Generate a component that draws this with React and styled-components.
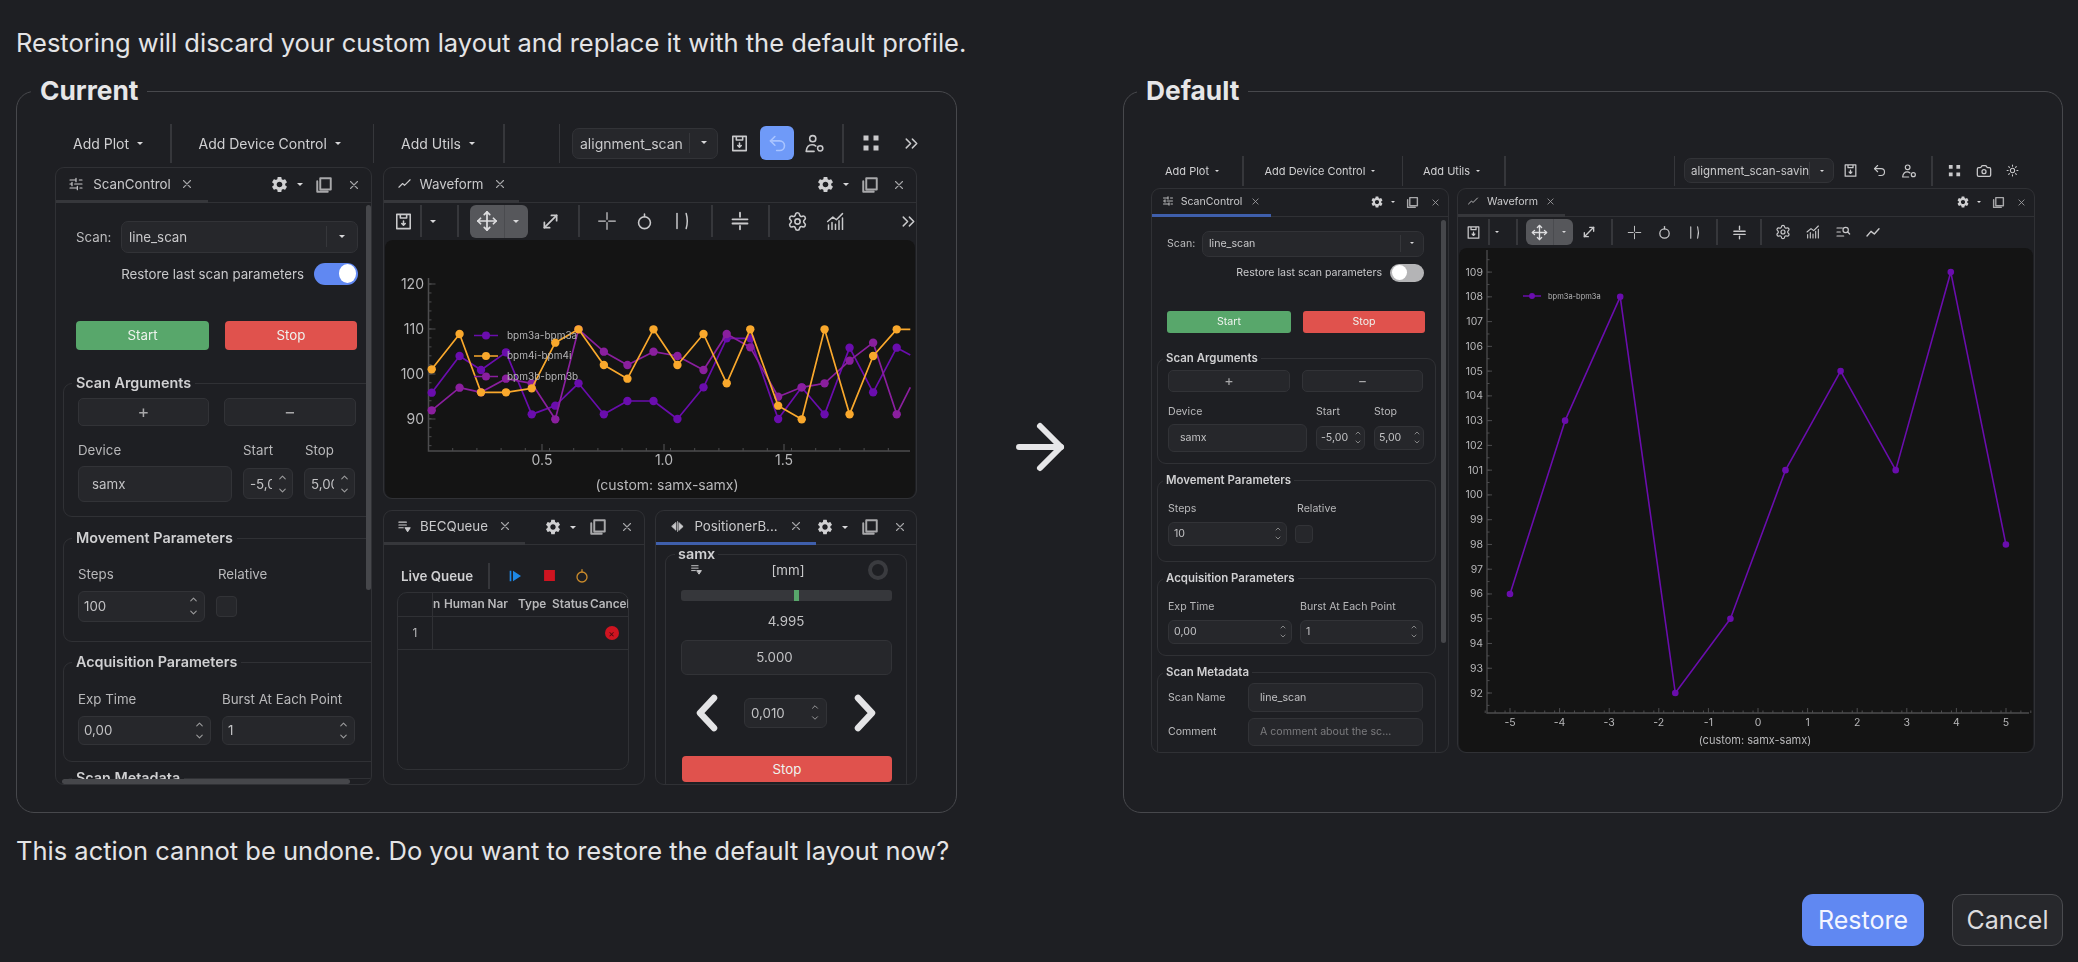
import React from 'react';
import styled, { createGlobalStyle } from 'styled-components';
import { Move, MoveDiagonal, Settings, Camera, Sun, Undo2, ChevronsRight, ArrowRight, ChevronUp, ChevronDown } from 'lucide-react';
import { MdSettings } from 'react-icons/md';

const BG = '#1e1f23';
const FONT = 'Inter, "Noto Sans", "Liberation Sans", sans-serif';

const Global = createGlobalStyle`
  html, body { margin: 0; background: ${BG}; }
  * { box-sizing: border-box; }
  #root { width: 2078px; height: 962px; overflow: hidden; }
`;

const Page = styled.div`
  width: 2078px; height: 962px; padding: 29px 15px 0 16px; background: ${BG};
  color: #e4e4e6; font-family: ${FONT}; display: flex; flex-direction: column;
`;
const Message = styled.p`
  margin: ${p => p.$mt || 0}px 0 0; font-size: 25.5px; line-height: 28px; height: 28px; color: #e4e4e6; white-space: nowrap;
`;
const Compare = styled.div`
  margin-top: 34px; display: flex; align-items: center; justify-content: space-between;
`;
const Frame = styled.section`
  width: ${p => p.$w}px; height: 722px; border: 1.5px solid #47484c; border-radius: 18px; padding-left: ${p => p.$pl}px;
  display: flex; flex-direction: column;
`;
const FrameTitle = styled.h2`
  margin: -15.5px 0 0 ${p => p.$ml}px; width: fit-content; height: 28px; line-height: 28px; padding: 0 9px;
  background: ${BG}; font-size: 26.3px; font-weight: 700; color: #e6e6e8;
`;
const BigArrow = styled.div`
  display: flex; width: 72px; justify-content: center; color: #e6e6e8; margin: 0 -5px 10px -5px;
`;
const Footer = styled.div`
  margin-top: 29px; display: flex; justify-content: flex-end; gap: 28px;
`;
const ActionButton = styled.button`
  height: 52px; width: ${p => p.$w}px; border-radius: 11px; font-family: ${FONT}; font-size: 25px; padding: 0;
  background: ${p => (p.$primary ? '#6088f2' : '#27282c')};
  color: ${p => (p.$primary ? '#f4f6ff' : '#dcdcde')};
  border: ${p => (p.$primary ? 'none' : '1.5px solid #4a4b4f')};
`;

/* ---------- application preview ---------- */
const Preview = styled.div`
  margin-top: ${p => p.$mt}px; width: ${p => p.$w}px; font-size: ${p => p.$fs}px; color: #c9c9cb;
  filter: blur(0.6px);
`;
const Bar = styled.div`
  display: flex; align-items: center; height: ${p => p.$h}px; flex: none; white-space: nowrap;
`;
const VSep = styled.div`
  flex: none; width: 1.5px; height: ${p => p.$h}px; background: #36373b;
`;
const Slot = styled.div`
  flex: none; display: flex; align-items: center; justify-content: center; width: ${p => p.$w}px; height: 100%;
  color: ${p => p.$color || 'inherit'};
`;
const MenuItem = styled.div`
  flex: none; width: ${p => p.$w}px; padding-left: ${p => p.$pl}px; display: flex; align-items: center; gap: ${p => p.$gap}px;
  color: #d0d0d2; font-size: ${p => p.$fs}px;
`;
const Caret = styled.span`
  flex: none; width: 0; height: 0;
  border-left: ${p => p.$s}px solid transparent; border-right: ${p => p.$s}px solid transparent;
  border-top: ${p => p.$s}px solid #d8d8da;
`;
const Combo = styled.div`
  flex: none; width: ${p => p.$w}px; height: ${p => p.$h}px; background: #26272b; border: 1px solid #323337; border-radius: 7px;
  display: flex; align-items: center; padding-left: ${p => p.$pl}px; overflow: hidden; font-size: ${p => (p.$fs ? `${p.$fs}px` : 'inherit')};
  margin-left: ${p => p.$ml || 0}px;
`;
const ComboText = styled.span`
  flex: 1; min-width: 0; overflow: hidden; white-space: nowrap;
`;
const ComboButton = styled.div`
  flex: none; width: ${p => p.$w}px; height: 70%; border-left: 1px solid #36373b; display: flex; align-items: center; justify-content: center;
`;
const Highlight = styled.div`
  width: 100%; height: ${p => p.$h}px; background: #6f9af8; color: #a9c4ff; border-radius: 6px;
  display: flex; align-items: center; justify-content: center;
`;
const Docks = styled.div`
  display: flex; gap: ${p => p.$gap}px; margin-top: ${p => p.$mt}px;
`;
const Column = styled.div`
  display: flex; flex-direction: column; gap: ${p => p.$gap}px; width: ${p => p.$w}px; flex: none;
`;
const Row = styled.div`
  display: flex; gap: ${p => p.$gap}px;
`;
const Panel = styled.div`
  position: relative; flex: none; width: ${p => p.$w}px; height: ${p => p.$h}px; border: 1px solid #303135; border-radius: 9px;
  overflow: hidden; display: flex; flex-direction: column;
`;
const PanelHeader = styled.div`
  flex: none; height: ${p => p.$h}px; display: flex; align-items: stretch; border-bottom: 1px solid #303135;
`;
const Tab = styled.div`
  flex: none; width: ${p => p.$w}px; display: flex; align-items: center; white-space: nowrap; overflow: hidden;
  border-bottom: ${p => p.$line}px solid ${p => (p.$active ? '#3f5fac' : '#36373b')};
  margin-bottom: -1px;
`;
const Tools = styled.div`
  display: flex; align-items: center;
`;
const Body = styled.div`
  flex: 1; min-height: 0; overflow: hidden; padding: ${p => p.$pt}px 0 0 ${p => p.$pl}px;
`;
const Labelled = styled.div`
  display: flex; align-items: center; width: ${p => p.$w}px;
`;
const FieldName = styled.span`
  flex: none; width: ${p => p.$w}px; white-space: nowrap; color: #bcbcbe;
`;
const ToggleRow = styled.div`
  margin-top: ${p => p.$mt}px; width: ${p => p.$w}px; height: ${p => p.$h}px; display: flex; align-items: center; justify-content: flex-end;
  gap: ${p => p.$gap}px; white-space: nowrap;
`;
const Toggle = styled.div`
  flex: none; width: ${p => p.$w}px; height: 100%; border-radius: 99px; background: ${p => (p.$on ? '#6088f2' : '#b4b4b6')};
  display: flex; align-items: center; justify-content: ${p => (p.$on ? 'flex-end' : 'flex-start')}; padding: 0 2px;
`;
const Knob = styled.div`
  height: 85%; aspect-ratio: ${p => p.$ratio}; border-radius: 50%; background: #fff;
`;
const ButtonRow = styled.div`
  margin-top: ${p => p.$mt}px; display: flex; gap: ${p => p.$gap}px;
`;
const RunButton = styled.div`
  flex: none; width: ${p => p.$w}px; height: ${p => p.$h}px; border-radius: ${p => p.$r || 4}px; background: ${p => p.$c};
  color: #eef3ee; display: flex; align-items: center; justify-content: center; margin-left: ${p => p.$ml || 0}px;
`;
const Group = styled.div`
  margin: ${p => p.$mt}px 0 0 ${p => p.$ml}px; width: ${p => p.$w}px; height: ${p => p.$h}px; flex: none;
  border: 1px solid #303135; border-radius: 9px; padding-left: ${p => p.$pl}px;
  ${p => p.$open && 'border-bottom: none;'}
`;
const GroupTitle = styled.div`
  margin: ${p => -p.$h / 2 - 1}px 0 0 ${p => p.$ml}px; width: fit-content; height: ${p => p.$h}px; line-height: ${p => p.$h}px;
  padding: 0 ${p => p.$pad}px; background: ${BG}; font-weight: 600; font-size: 1.08em; color: #d0d0d2; white-space: nowrap;
`;
const Cols = styled.div`
  display: grid; grid-template-columns: ${p => p.$cols}; column-gap: ${p => p.$gap}px; align-items: center; margin-top: ${p => p.$mt}px;
`;
const Label = styled.div`
  height: ${p => p.$h}px; line-height: ${p => p.$h}px; white-space: nowrap; color: #b8b8ba;
  margin-left: ${p => p.$ml || 0}px;
`;
const SquareButton = styled.div`
  height: ${p => p.$h}px; background: #26272b; border: 1px solid #323337; border-radius: 5px; color: #a8a8aa;
  display: flex; align-items: center; justify-content: center; font-size: 1.35em;
`;
const TextBox = styled.div`
  flex: none; height: ${p => p.$h}px; width: ${p => (p.$w ? `${p.$w}px` : 'auto')}; background: #26272b; border: 1px solid #323337; border-radius: 6px; display: flex; align-items: center;
  padding-left: ${p => p.$pl}px; white-space: nowrap; overflow: hidden; color: ${p => (p.$dim ? '#7b7b7e' : '#c2c2c4')};
`;
const Spin = styled.div`
  flex: none; height: ${p => p.$h}px; width: ${p => (p.$w ? `${p.$w}px` : 'auto')}; margin-left: ${p => p.$ml || 0}px;
  background: #26272b; border: 1px solid #323337; border-radius: 6px; display: flex; align-items: center;
  padding-left: ${p => p.$pl}px; overflow: hidden; color: #c2c2c4;
`;
const SpinText = styled.span`
  flex: 1; min-width: 0; overflow: hidden; white-space: nowrap;
`;
const SpinArrows = styled.div`
  flex: none; width: ${p => p.$w}px; display: flex; flex-direction: column; align-items: center; gap: ${p => p.$gap}px; color: #9a9a9c;
`;
const Check = styled.div`
  width: ${p => p.$s}px; height: ${p => p.$s}px; background: #26272b; border: 1px solid #323337; border-radius: 4px;
`;
const Inline = styled.div`
  display: flex; align-items: center; margin-top: ${p => p.$mt}px; gap: ${p => p.$gap || 0}px;
`;
const VScroll = styled.div`
  position: absolute; top: ${p => p.$top}px; right: ${p => p.$right}px; width: 5px; height: ${p => p.$h}px; background: #46474b; border-radius: 3px;
`;
const HScroll = styled.div`
  position: absolute; bottom: 0; left: 6px; width: ${p => p.$w}px; height: 5px; background: #46474b; border-radius: 3px;
`;
const PlotBox = styled.div`
  flex: 1; min-height: 0; background: #141414; border-radius: 8px; margin: 0 1px; overflow: hidden;
`;
const Canvas = styled.svg`
  display: block; font-family: ${FONT};
`;
const ToolStrip = styled.div`
  flex: none; height: ${p => p.$h}px; display: flex; align-items: center;
`;
const ModeButton = styled.div`
  width: 100%; height: ${p => p.$h}px; background: #56575b; border-radius: 6px; display: flex; align-items: center; color: #dedee0;
`;
const ModeIcon = styled.div`
  flex: none; width: 60%; height: 100%; display: flex; align-items: center; justify-content: center; border-right: 1px solid #4a4b4f;
`;
const ModeCaret = styled.div`
  flex: 1; display: flex; align-items: center; justify-content: center;
`;
/* queue */
const QueueHead = styled.div`
  display: flex; align-items: center; height: 30px; font-weight: 600; color: #d0d0d2; white-space: nowrap;
`;
const Table = styled.div`
  margin: 1px 0 0 13px; width: 232px; height: 178px; border: 1px solid #303135; border-radius: 10px; overflow: hidden;
  font-size: 11.8px;
`;
const TRow = styled.div`
  display: flex; height: ${p => p.$h}px; border-bottom: 1px solid #303135; align-items: stretch;
`;
const TCell = styled.div`
  flex: none; width: ${p => p.$w}px; display: flex; align-items: center; justify-content: ${p => p.$j || 'flex-start'};
  padding-left: ${p => p.$pl || 0}px; overflow: hidden; white-space: nowrap; font-weight: ${p => p.$b ? 600 : 400};
  color: #b8b8ba; border-right: ${p => (p.$line ? '1px solid #303135' : 'none')};
`;
const CancelDot = styled.div`
  width: 14px; height: 14px; border-radius: 50%; background: #cf1420; color: #4a0a10; font-size: 10px; line-height: 14px; text-align: center;
`;
/* positioner */
const PosGrid = styled.div`
  display: grid; grid-template-columns: 60px 124px 56px; height: 20px; margin-top: -2px; align-items: center; justify-items: center;
`;
const Ring = styled.div`
  width: 20px; height: 20px; border-radius: 50%; border: 4px solid #3a3b3f;
`;
const Track = styled.div`
  margin: 10px 0 0 15px; width: 211px; height: 11px; border-radius: 3px; background: #36373b; padding-left: 113px;
`;
const TrackMark = styled.div`
  width: 5px; height: 100%; background: #58a76b;
`;
const Readout = styled.div`
  margin-top: 10px; height: 20px; line-height: 20px; text-align: center; color: #c2c2c4;
`;
const TargetBox = styled.div`
  margin: 9px 0 0 15px; width: 211px; height: 35px; background: #26272b; border: 1px solid #323337; border-radius: 6px;
  display: flex; align-items: center; justify-content: center; padding-right: 24px; color: #c2c2c4;
`;
const StepRow = styled.div`
  margin: 19px 0 0 15px; display: flex; align-items: center; height: 38px;
`;
const StepArrow = styled.div`
  flex: none; width: 52px; display: flex; justify-content: center; margin-left: ${p => p.$ml || 0}px;
`;

/* ---------- icons ---------- */
const Svg = ({ s, w = 2, fill = 'none', children }) => (
  <svg width={s} height={s} viewBox="0 0 24 24" fill={fill} stroke="currentColor" strokeWidth={w} strokeLinecap="round" strokeLinejoin="round">{children}</svg>
);
const I = {
  close: s => <Svg s={s} w={2.2}><path d="M5 5l14 14M19 5L5 19" /></Svg>,
  max: s => <Svg s={s} w={2.6}><path d="M7 3h14v15H7zM3 7v14h14" /></Svg>,
  gear: s => <MdSettings size={s} />,
  tune: s => <Svg s={s} w={1.8}><path d="M3 6h9M17 6h4M12 3.5v5M3 12h3M10 12h11M6 9.5v5M3 18h11M18 18h3M14 15.5v5" /></Svg>,
  wave: s => <Svg s={s} w={1.8}><path d="M3 18l6-6 3 3 9-9" /></Svg>,
  queue: s => <Svg s={s} w={1.8}><path d="M3 5h12M3 9.5h12M3 14h7" /><path d="M13 14h8l-4 6z" fill="currentColor" /></Svg>,
  pos: s => <Svg s={s} w={1.2}><path d="M9.5 6v12L3 12zM14.5 6l6.5 6-6.5 6z" fill="currentColor" /><path d="M12 4v16" /></Svg>,
  save: s => <Svg s={s} w={2}><path d="M3.5 3h17v18h-17zM8 3v4.5h8V3M12 11.5v5M9.8 14.5l2.2 2.2 2.2-2.2" /></Svg>,
  undo: s => <Undo2 size={s} strokeWidth={1.8} />,
  user: s => <Svg s={s} w={1.8}><circle cx="10" cy="6.5" r="3.5" /><path d="M2.5 21c.5-5 3.2-7.6 6.8-7.6 1.6 0 3 .5 4.2 1.5M2.5 21h9" /><circle cx="18.5" cy="17.5" r="3" /></Svg>,
  grid: s => <Svg s={s} w={0} fill="currentColor"><path d="M3 3h6v6H3zM15 3h6v6h-6zM3 15h6v6H3zM15 15h6v6h-6z" /></Svg>,
  camera: s => <Camera size={s} strokeWidth={1.9} />,
  sun: s => <Sun size={s} strokeWidth={1.9} />,
  more: s => <ChevronsRight size={s} strokeWidth={1.7} />,
  move: s => <Move size={s} strokeWidth={1.9} />,
  diag: s => <MoveDiagonal size={s} strokeWidth={2} />,
  cross: s => <Svg s={s} w={1.5}><path d="M12 2v8M12 14v8M2 12h8M14 12h8" /></Svg>,
  ring: s => <Svg s={s} w={2}><circle cx="12" cy="13.5" r="7.5" /><path d="M12 2.5v3.5" /></Svg>,
  bars: s => <Svg s={s} w={1.8}><path d="M6 3v18" /><path d="M17 3c1.5 5 1.5 13 0 18" /></Svg>,
  center: s => <Svg s={s} w={2.2}><path d="M3 10h18M3 15h18M12 2v5M12 18v4" /></Svg>,
  cog: s => <Settings size={s} strokeWidth={1.8} />,
  chart: s => <Svg s={s} w={1.7}><path d="M4 21v-5M8 21v-8M12 21v-6M16 21v-10M20 21v-13M3 12l6-5 4 3 7-7" /></Svg>,
  zoom: s => <Svg s={s} w={1.8}><path d="M3 6h8M3 12h5M3 18h10" /><circle cx="16" cy="9" r="4" /><path d="M19 12l3 3" /></Svg>,
  line: s => <Svg s={s} w={2.1}><path d="M3 18l6-7 5 4 7-8" /></Svg>,
  play: s => <Svg s={s} w={0} fill="currentColor"><path d="M4 4h2.5v16H4zM9 4l12 8-12 8z" /></Svg>,
  stop: s => <Svg s={s} w={0} fill="currentColor"><path d="M2 2h20v20H2z" /></Svg>,
};
const Arrows = ({ s, gap, w }) => (
  <SpinArrows $w={w} $gap={gap}><ChevronUp size={s} strokeWidth={2.4} /><ChevronDown size={s} strokeWidth={2.4} /></SpinArrows>
);

/* Lays items out in flow so each one's centre falls on `at`. */
const Placed = ({ start, items }) => {
  let cursor = start;
  return items.map((it, i) => {
    const ml = it.at - it.w / 2 - cursor;
    cursor = it.at + it.w / 2;
    return <Slot key={i} $w={it.w} $color={it.color} style={{ marginLeft: ml }}>{it.node}</Slot>;
  });
};
const sep = (at, h) => ({ at, w: 2, node: <VSep $h={h} /> });
const ic = (at, name, s, w = 24, color) => ({ at, w, color, node: I[name](s) });

const Head = ({ h, x, tabW, line, active, icon, title, titleW, iconAt, textAt, closeAt, tools, isz, xs }) => (
  <PanelHeader $h={h}>
    <Tab $w={tabW} $line={line} $active={active}>
      <Placed start={x} items={[
        ic(iconAt, icon, isz, isz),
        { at: textAt + titleW / 2, w: titleW, node: <span>{title}</span> },
        ic(closeAt, 'close', xs, xs, '#a4a4a6'),
      ]} />
    </Tab>
    <Tools><Placed start={x + tabW} items={tools} /></Tools>
  </PanelHeader>
);
const dockTools = (g, c, m, x, gs, cs, ms, xs) => [
  ic(g, 'gear', gs, gs, '#d0d0d2'),
  { at: c, w: 10, node: <Caret $s={cs} /> },
  ic(m, 'max', ms, ms, '#a8a8aa'),
  ic(x, 'close', xs, xs, '#a4a4a6'),
];

/* ---------- charts ---------- */
const xs1 = [142, 220, 280, 350, 422, 488, 553, 624, 690, 763, 830, 903, 968, 1034, 1112, 1178, 1242, 1312, 1378, 1444, 1482];
const a1 = [488, 378, 420, 367, 553, 527, 460, 553, 513, 513, 567, 472, 325, 325, 567, 472, 553, 353, 487, 353, 375];
const a2 = [418, 312, 487, 487, 475, 338, 298, 405, 446, 298, 405, 312, 460, 298, 527, 568, 298, 553, 378, 298, 298];
const a3 = [541, 473, 487, 446, 460, 568, 298, 365, 405, 365, 378, 420, 312, 352, 500, 472, 460, 392, 338, 553, 472];
const lx = z => z / 2.8 - 4;
const ly = z => z / 3 - 10;
const Series = ({ xs, ys, color, r, w, clipLast }) => (
  <g>
    <polyline points={xs.map((x, i) => `${x},${ys[i]}`).join(' ')} fill="none" stroke={color} strokeWidth={w} strokeLinejoin="round" />
    {xs.map((x, i) => (clipLast && i === xs.length - 1 ? null : <circle key={i} cx={x} cy={ys[i]} r={r} fill={color} />))}
  </g>
);
const range = (a, b, step) => { const out = []; for (let v = a; v <= b + 1e-6; v += step) out.push(v); return out; };

const CurrentPlot = () => {
  const xs = xs1.map(lx);
  const AX = '#4c4c4e';
  return (
    <Canvas width="531" height="258">
      <path d="M43.5 38V211H525" fill="none" stroke={AX} strokeWidth="1.5" />
      {range(44, 209, 8.98).map(y => <path key={y} d={`M43.5 ${y}h3`} stroke={AX} />)}
      {[44, 89, 134, 179].map(y => <path key={y} d={`M43.5 ${y}h7`} stroke={AX} strokeWidth="1.2" />)}
      {range(43.5, 525, 24.2).map(x => <path key={x} d={`M${x} 211v-3`} stroke={AX} />)}
      {[157, 279, 399].map(x => <path key={x} d={`M${x} 211v-7`} stroke={AX} strokeWidth="1.2" />)}
      <g fill="#b8b8ba" fontSize="14" textAnchor="end">
        {[['120', 44], ['110', 89], ['100', 134], ['90', 179]].map(([t, y]) => <text key={t} x="39" y={y + 5}>{t}</text>)}
      </g>
      <g fill="#b8b8ba" fontSize="14" textAnchor="middle">
        {[['0.5', 157], ['1.0', 279], ['1.5', 399]].map(([t, x]) => <text key={t} x={x} y="225">{t}</text>)}
        <text x="282" y="250">(custom: samx-samx)</text>
      </g>
      <Series xs={xs} ys={a1.map(ly)} color="#6a0dad" r={4.2} w={1.7} clipLast />
      <Series xs={xs} ys={a3.map(ly)} color="#8a1f9e" r={4.2} w={1.7} clipLast />
      <Series xs={xs} ys={a2.map(ly)} color="#f9a82c" r={4.2} w={1.7} clipLast />
      {[['bpm3a-bpm3a', '#6a0dad', 95.5], ['bpm4i-bpm4i', '#f9a82c', 116], ['bpm3b-bpm3b', '#8a1f9e', 136.5]].map(([t, c, y]) => (
        <g key={t}>
          <path d={`M89 ${y}h24`} stroke={c} strokeWidth="1.7" />
          <circle cx="101" cy={y} r="4" fill={c} />
          <text x="122" y={y + 3} fill="#b4b4b6" fontSize="10">{t}</text>
        </g>
      ))}
    </Canvas>
  );
};
const DefaultPlot = () => {
  const AX = '#4c4c4e';
  const vy = v => 693 - (v - 92) * 24.76 - 248;
  const vx = v => 1510 + (v + 5) * 49.6 - 1459;
  const pts = [96, 103, 108, 92, 95, 101, 105, 101, 109, 98];
  const xs = pts.map((_, i) => 51 + i * 55.1);
  return (
    <Canvas width="576" height="505">
      <path d="M28 2V465H570" fill="none" stroke={AX} strokeWidth="1.3" />
      {range(91.5, 109.5, 0.5).map(v => <path key={v} d={`M28 ${vy(v)}h2.5`} stroke={AX} />)}
      {range(92, 109, 1).map(v => <path key={v} d={`M28 ${vy(v)}h5`} stroke={AX} />)}
      {range(-5.5, 5.5, 0.2).map(v => <path key={v} d={`M${vx(v)} 465v-2.5`} stroke={AX} />)}
      {range(-5, 5, 1).map(v => <path key={v} d={`M${vx(v)} 465v-5`} stroke={AX} />)}
      <g fill="#b8b8ba" fontSize="10.5" textAnchor="end">
        {range(92, 109, 1).map(v => <text key={v} x="24" y={vy(v) + 3.5}>{v}</text>)}
      </g>
      <g fill="#b8b8ba" fontSize="10.5" textAnchor="middle">
        {range(-5, 5, 1).map(v => <text key={v} x={vx(v)} y="477.5">{v}</text>)}
        <text x="296" y="495.5" fontSize="11">(custom: samx-samx)</text>
      </g>
      <Series xs={xs} ys={pts.map(vy)} color="#6a0dad" r={3.3} w={1.6} />
      <path d="M64 48h18" stroke="#6a0dad" strokeWidth="1.4" />
      <circle cx="73" cy="48" r="3" fill="#6a0dad" />
      <text x="89" y="50.5" fill="#b4b4b6" fontSize="7.5">bpm3a-bpm3a</text>
    </Canvas>
  );
};

const ChevronL = () => (
  <svg width="24" height="38" viewBox="0 0 24 38" fill="none" stroke="#e4e4e6" strokeWidth="6.5" strokeLinecap="round" strokeLinejoin="round"><path d="M19 4L5 19l14 15" /></svg>
);
const ChevronR = () => (
  <svg width="24" height="38" viewBox="0 0 24 38" fill="none" stroke="#e4e4e6" strokeWidth="6.5" strokeLinecap="round" strokeLinejoin="round"><path d="M5 4l14 15L5 34" /></svg>
);

/* ---------- Current ---------- */
const CurrentPreview = () => (
  <Preview $mt={19} $w={862} $fs={13.3}>
    <Bar $h={39}>
      <MenuItem $w={115} $pl={18} $gap={8} $fs={14}>Add Plot<Caret $s={3} /></MenuItem>
      <VSep $h={39} />
      <MenuItem $w={201} $pl={27} $gap={8} $fs={14}>Add Device Control<Caret $s={3} /></MenuItem>
      <VSep $h={39} />
      <MenuItem $w={129} $pl={27} $gap={8} $fs={14}>Add Utils<Caret $s={3} /></MenuItem>
      <VSep $h={39} />
      <Slot $w={54} />
      <VSep $h={39} />
      <Combo $w={146} $h={31} $pl={7} $ml={12} $fs={14}>
        <ComboText>alignment_scan</ComboText>
        <ComboButton $w={28}><Caret $s={3.5} /></ComboButton>
      </Combo>
      <Placed start={718} items={[
        ic(739, 'save', 19, 30),
        { at: 777, w: 34, node: <Highlight $h={34}>{I.undo(21)}</Highlight> },
        ic(814, 'user', 21, 30),
        sep(843, 39),
        ic(871, 'grid', 20, 30),
        ic(911, 'more', 21, 24),
      ]} />
    </Bar>
    <Docks $gap={11} $mt={4}>
      <Panel $w={317} $h={618}>
        <Head h={35} x={56} tabW={152} line={3} active={false} icon="tune" title="ScanControl" titleW={80} iconAt={76} textAt={92} closeAt={187} isz={16} xs={12}
          tools={dockTools(279, 300, 324, 354, 19, 3, 18, 12)} />
        <Body $pt={18} $pl={20}>
          <Labelled $w={282}>
            <FieldName $w={45}>Scan:</FieldName>
            <Combo $w={237} $h={32} $pl={7}>
              <ComboText>line_scan</ComboText>
              <ComboButton $w={31}><Caret $s={3.5} /></ComboButton>
            </Combo>
          </Labelled>
          <ToggleRow $mt={10} $w={282} $h={22} $gap={10}>
            Restore last scan parameters
            <Toggle $w={44} $on><Knob $ratio={0.9} /></Toggle>
          </ToggleRow>
          <ButtonRow $mt={36} $gap={16}>
            <RunButton $w={133} $h={29} $c="#58a76b">Start</RunButton>
            <RunButton $w={132} $h={29} $c="#e0524d">Stop</RunButton>
          </ButtonRow>
          <Group $mt={33} $ml={-13} $w={340} $h={134} $pl={14}>
            <GroupTitle $h={16} $pad={4} $ml={-6}>Scan Arguments</GroupTitle>
            <Cols $cols="131px 132px" $gap={15} $mt={7}>
              <SquareButton $h={28}>+</SquareButton>
              <SquareButton $h={28}>−</SquareButton>
            </Cols>
            <Cols $cols="154px 50px 51px" $gap={11} $mt={16}>
              <Label $h={16}>Device</Label>
              <Label $h={16}>Start</Label>
              <Label $h={16} $ml={1}>Stop</Label>
            </Cols>
            <Cols $cols="154px 50px 51px" $gap={11} $mt={8}>
              <TextBox $h={36} $pl={13}>samx</TextBox>
              <Spin $h={31} $pl={6}><SpinText>-5,00</SpinText><Arrows s={11} gap={2} w={20} /></Spin>
              <Spin $h={31} $pl={6}><SpinText>5,00</SpinText><Arrows s={11} gap={2} w={20} /></Spin>
            </Cols>
          </Group>
          <Group $mt={21} $ml={-13} $w={340} $h={104} $pl={14}>
            <GroupTitle $h={16} $pad={4} $ml={-6}>Movement Parameters</GroupTitle>
            <Cols $cols="127px 30px" $gap={11} $mt={20}>
              <Label $h={16}>Steps</Label>
              <Label $h={16} $ml={2}>Relative</Label>
            </Cols>
            <Cols $cols="127px 30px" $gap={11} $mt={9}>
              <Spin $h={31} $pl={5}><SpinText>100</SpinText><Arrows s={11} gap={2} w={22} /></Spin>
              <Check $s={21} />
            </Cols>
          </Group>
          <Group $mt={20} $ml={-13} $w={340} $h={100} $pl={14}>
            <GroupTitle $h={16} $pad={4} $ml={-6}>Acquisition Parameters</GroupTitle>
            <Cols $cols="133px 133px" $gap={11} $mt={21}>
              <Label $h={16}>Exp Time</Label>
              <Label $h={16}>Burst At Each Point</Label>
            </Cols>
            <Cols $cols="133px 133px" $gap={11} $mt={9}>
              <Spin $h={29} $pl={5}><SpinText>0,00</SpinText><Arrows s={11} gap={1} w={22} /></Spin>
              <Spin $h={29} $pl={5}><SpinText>1</SpinText><Arrows s={11} gap={1} w={22} /></Spin>
            </Cols>
          </Group>
          <Group $mt={16} $ml={-13} $w={340} $h={60} $pl={14}>
            <GroupTitle $h={16} $pad={4} $ml={-6}>Scan Metadata</GroupTitle>
          </Group>
        </Body>
        <VScroll $top={37} $right={0} $h={385} />
        <HScroll $w={288} />
      </Panel>
      <Column $w={534} $gap={11}>
        <Panel $w={534} $h={332}>
          <Head h={35} x={384} tabW={135} line={3} active={false} icon="wave" title="Waveform" titleW={65} iconAt={404} textAt={419} closeAt={500} isz={15} xs={12}
            tools={dockTools(825, 846, 870, 899, 19, 3, 18, 12)} />
          <ToolStrip $h={37}>
            <Placed start={384} items={[
              ic(403, 'save', 19, 28), sep(421, 32),
              { at: 433, w: 10, node: <Caret $s={3} /> }, sep(458, 32),
              { at: 499, w: 58, node: <ModeButton $h={33}><ModeIcon>{I.move(22)}</ModeIcon><ModeCaret><Caret $s={3} /></ModeCaret></ModeButton> },
              ic(550, 'diag', 21), sep(579, 32),
              ic(607, 'cross', 20), ic(644, 'ring', 19), ic(682, 'bars', 20), sep(712, 32),
              ic(740, 'center', 20), sep(769, 32),
              ic(797, 'cog', 21), ic(835, 'chart', 21), ic(908, 'more', 21),
            ]} />
          </ToolStrip>
          <PlotBox><CurrentPlot /></PlotBox>
        </Panel>
        <Row $gap={10}>
          <Panel $w={262} $h={275}>
            <Head h={34} x={384} tabW={141} line={3} active={false} icon="queue" title="BECQueue" titleW={70} iconAt={404} textAt={419} closeAt={505} isz={15} xs={12}
              tools={dockTools(553, 573, 598, 627, 18, 3, 18, 12)} />
            <Body $pt={16} $pl={0}>
              <QueueHead>
                <Placed start={384} items={[
                  { at: 437, w: 76, node: <span>Live Queue</span> },
                  sep(489, 26),
                  ic(515, 'play', 16, 16, '#1e88e5'),
                  ic(549, 'stop', 13, 16, '#cf1420'),
                  ic(582, 'ring', 16, 16, '#c98a2b'),
                ]} />
              </QueueHead>
              <Table>
                <TRow $h={24}>
                  <TCell $w={35} $line />
                  <TCell $w={11} $b><span>n</span></TCell>
                  <TCell $w={74} $b>Human Nar</TCell>
                  <TCell $w={34} $b>Type</TCell>
                  <TCell $w={38} $b>Status</TCell>
                  <TCell $w={38} $b>Cancel</TCell>
                </TRow>
                <TRow $h={33}>
                  <TCell $w={35} $line $j="center">1</TCell>
                  <TCell $w={161} />
                  <TCell $w={35} $j="center"><CancelDot>×</CancelDot></TCell>
                </TRow>
              </Table>
            </Body>
          </Panel>
          <Panel $w={262} $h={275}>
            <Head h={34} x={656} tabW={160} line={3} active icon="pos" title="PositionerB..." titleW={84} iconAt={677} textAt={694} closeAt={796} isz={15} xs={12}
              tools={dockTools(825, 845, 870, 900, 18, 3, 18, 12)} />
            <Body $pt={9} $pl={9}>
              <Group $mt={0} $ml={0} $w={242} $h={240} $pl={0} $open>
                <GroupTitle $h={16} $pad={3} $ml={9}>samx</GroupTitle>
                <PosGrid>
                  {I.queue(13)}
                  <span>[mm]</span>
                  <Ring />
                </PosGrid>
                <Track><TrackMark /></Track>
                <Readout>4.995</Readout>
                <TargetBox>5.000</TargetBox>
                <StepRow>
                  <StepArrow><ChevronL /></StepArrow>
                  <Spin $h={30} $pl={6} $w={83} $ml={11}><SpinText>0,010</SpinText><Arrows s={10} gap={1} w={22} /></Spin>
                  <StepArrow $ml={12}><ChevronR /></StepArrow>
                </StepRow>
                <ButtonRow $mt={24} $gap={0}>
                  <RunButton $w={210} $h={26} $c="#e0524d" $ml={16}>Stop</RunButton>
                </ButtonRow>
              </Group>
            </Body>
          </Panel>
        </Row>
      </Column>
    </Docks>
  </Preview>
);

/* ---------- Default ---------- */
const DefaultPreview = () => (
  <Preview $mt={51} $w={884} $fs={10.6}>
    <Bar $h={30}>
      <MenuItem $w={91} $pl={14} $gap={6} $fs={11}>Add Plot<Caret $s={2.5} /></MenuItem>
      <VSep $h={30} />
      <MenuItem $w={158} $pl={21} $gap={6} $fs={11}>Add Device Control<Caret $s={2.5} /></MenuItem>
      <VSep $h={30} />
      <MenuItem $w={101} $pl={20} $gap={6} $fs={11}>Add Utils<Caret $s={2.5} /></MenuItem>
      <VSep $h={30} />
      <Slot $w={168} />
      <VSep $h={30} />
      <Combo $w={150} $h={25} $pl={6} $ml={9} $fs={11.5}>
        <ComboText>alignment_scan-saving</ComboText>
        <ComboButton $w={24}><Caret $s={2.8} /></ComboButton>
      </Combo>
      <Placed start={1833} items={[
        ic(1849, 'save', 15, 24), ic(1878, 'undo', 15, 24), ic(1908, 'user', 16, 24),
        sep(1931, 30),
        ic(1953, 'grid', 15, 24), ic(1983, 'camera', 16, 24), ic(2011, 'sun', 13, 24),
      ]} />
    </Bar>
    <Docks $gap={8} $mt={2}>
      <Panel $w={298} $h={565}>
        <Head h={28} x={1152} tabW={119} line={3} active icon="tune" title="ScanControl" titleW={63} iconAt={1168} textAt={1180} closeAt={1255} isz={12} xs={9}
          tools={dockTools(1377, 1393, 1412, 1435, 14, 2.5, 13, 9)} />
        <Body $pt={14} $pl={15}>
          <Labelled $w={258}>
            <FieldName $w={35}>Scan:</FieldName>
            <Combo $w={222} $h={26} $pl={6}>
              <ComboText>line_scan</ComboText>
              <ComboButton $w={23}><Caret $s={2.8} /></ComboButton>
            </Combo>
          </Labelled>
          <ToggleRow $mt={7} $w={257} $h={18} $gap={8}>
            Restore last scan parameters
            <Toggle $w={34}><Knob $ratio={1} /></Toggle>
          </ToggleRow>
          <ButtonRow $mt={29} $gap={12}>
            <RunButton $w={124} $h={22} $c="#58a76b" $r={3}>Start</RunButton>
            <RunButton $w={122} $h={22} $c="#e0524d" $r={3}>Stop</RunButton>
          </ButtonRow>
          <Group $mt={25} $ml={-10} $w={279} $h={106} $pl={10}>
            <GroupTitle $h={12} $pad={3} $ml={-5}>Scan Arguments</GroupTitle>
            <Cols $cols="122px 121px" $gap={12} $mt={6}>
              <SquareButton $h={22}>+</SquareButton>
              <SquareButton $h={22}>−</SquareButton>
            </Cols>
            <Cols $cols="139px 49px 50px" $gap={9} $mt={14}>
              <Label $h={12}>Device</Label>
              <Label $h={12}>Start</Label>
              <Label $h={12}>Stop</Label>
            </Cols>
            <Cols $cols="139px 49px 50px" $gap={9} $mt={6}>
              <TextBox $h={28} $pl={11}>samx</TextBox>
              <Spin $h={24} $pl={4}><SpinText>-5,00</SpinText><Arrows s={8} gap={1} w={13} /></Spin>
              <Spin $h={24} $pl={4}><SpinText>5,00</SpinText><Arrows s={8} gap={1} w={13} /></Spin>
            </Cols>
          </Group>
          <Group $mt={16} $ml={-10} $w={279} $h={82} $pl={10}>
            <GroupTitle $h={12} $pad={3} $ml={-5}>Movement Parameters</GroupTitle>
            <Cols $cols="119px 40px" $gap={8} $mt={17}>
              <Label $h={12}>Steps</Label>
              <Label $h={12} $ml={2}>Relative</Label>
            </Cols>
            <Cols $cols="119px 40px" $gap={8} $mt={7}>
              <Spin $h={24} $pl={5}><SpinText>10</SpinText><Arrows s={8} gap={1} w={16} /></Spin>
              <Check $s={18} />
            </Cols>
          </Group>
          <Group $mt={16} $ml={-10} $w={279} $h={78} $pl={10}>
            <GroupTitle $h={12} $pad={3} $ml={-5}>Acquisition Parameters</GroupTitle>
            <Cols $cols="124px 123px" $gap={8} $mt={17}>
              <Label $h={12}>Exp Time</Label>
              <Label $h={12}>Burst At Each Point</Label>
            </Cols>
            <Cols $cols="124px 123px" $gap={8} $mt={7}>
              <Spin $h={24} $pl={5}><SpinText>0,00</SpinText><Arrows s={8} gap={1} w={16} /></Spin>
              <Spin $h={24} $pl={5}><SpinText>1</SpinText><Arrows s={8} gap={1} w={16} /></Spin>
            </Cols>
          </Group>
          <Group $mt={16} $ml={-10} $w={279} $h={90} $pl={10}>
            <GroupTitle $h={12} $pad={3} $ml={-5}>Scan Metadata</GroupTitle>
            <Inline $mt={5}>
              <FieldName $w={80}>Scan Name</FieldName>
              <TextBox $h={29} $pl={11} $w={175}>line_scan</TextBox>
            </Inline>
            <Inline $mt={6}>
              <FieldName $w={80}>Comment</FieldName>
              <TextBox $h={28} $pl={11} $dim $w={175}>A comment about the sc...</TextBox>
            </Inline>
          </Group>
        </Body>
        <VScroll $top={31} $right={2} $h={423} />
      </Panel>
      <Panel $w={578} $h={565}>
        <Head h={28} x={1458} tabW={107} line={3} active={false} icon="wave" title="Waveform" titleW={53} iconAt={1473} textAt={1486} closeAt={1550} isz={12} xs={9}
          tools={dockTools(1963, 1979, 1998, 2021, 14, 2.5, 13, 9)} />
        <ToolStrip $h={31}>
          <Placed start={1458} items={[
            ic(1473, 'save', 15, 22), sep(1489, 26),
            { at: 1497, w: 8, node: <Caret $s={2.5} /> }, sep(1517, 26),
            { at: 1549.5, w: 47, node: <ModeButton $h={26}><ModeIcon>{I.move(17)}</ModeIcon><ModeCaret><Caret $s={2.5} /></ModeCaret></ModeButton> },
            ic(1589, 'diag', 16, 22), sep(1612, 26),
            ic(1634, 'cross', 15, 22), ic(1664, 'ring', 15, 22), ic(1694, 'bars', 15, 22), sep(1717, 26),
            ic(1739, 'center', 15, 22), sep(1761, 26),
            ic(1783, 'cog', 16, 22), ic(1813, 'chart', 16, 22), ic(1843, 'zoom', 16, 22), ic(1873, 'line', 16, 22),
          ]} />
        </ToolStrip>
        <PlotBox><DefaultPlot /></PlotBox>
      </Panel>
    </Docks>
  </Preview>
);

export default function App() {
  return (
    <Page>
      <Global />
      <Message>Restoring will discard your custom layout and replace it with the default profile.</Message>
      <Compare>
        <Frame $w={941} $pl={38}>
          <FrameTitle $ml={-24}>Current</FrameTitle>
          <CurrentPreview />
        </Frame>
        <BigArrow><ArrowRight size={72} strokeWidth={2} /></BigArrow>
        <Frame $w={940} $pl={27}>
          <FrameTitle $ml={-14}>Default</FrameTitle>
          <DefaultPreview />
        </Frame>
      </Compare>
      <Message $mt={24}>This action cannot be undone. Do you want to restore the default layout now?</Message>
      <Footer>
        <ActionButton $primary $w={122}>Restore</ActionButton>
        <ActionButton $w={111}>Cancel</ActionButton>
      </Footer>
    </Page>
  );
}
